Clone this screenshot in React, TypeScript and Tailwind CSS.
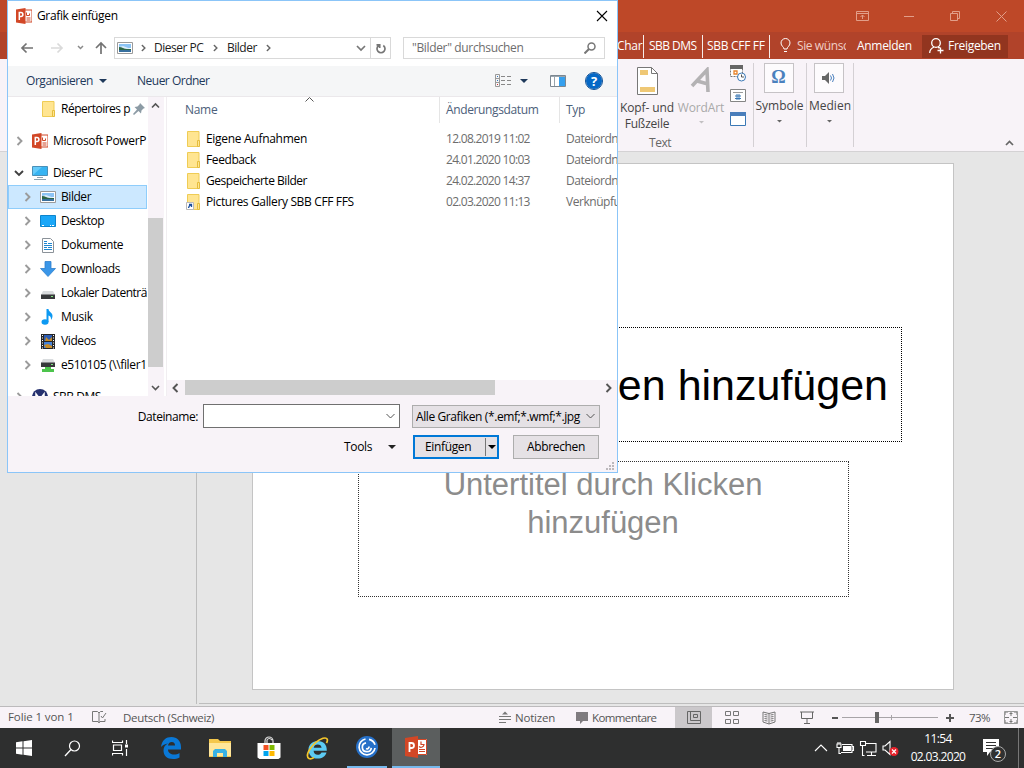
import React from "react";

type P = { children?: React.ReactNode; className?: string };

const Svg = ({ w, h, className = "", children }: P & { w: number; h: number }) => (
  <svg width={w} height={h} viewBox={`0 0 ${w} ${h}`} fill="none" className={`shrink-0 ${className}`}>
    {children}
  </svg>
);

const PptIcon = () => (
  <Svg w={16} h={16}>
    <path d="M8 2h8v12H8z" fill="#fff" stroke="#d04727" />
    <path d="M10.500 4.500v3h3v-2M10.500 10h4M10.500 12h4" stroke="#d04727" />
    <path d="M0 1.500L9.500 0v16L0 14.500z" fill="#d24726" />
    <path d="M3.300 12V4.500h1.600a1.900 1.900 0 0 1 0 4H3.300" stroke="#fff" strokeWidth="1.500" />
  </Svg>
);

const Folder = ({ link = false }: { link?: boolean }) => (
  <Svg w={16} h={16}>
    <path d="M1.500.5h11.500v15H1.500z" fill="#ffe591" stroke="#efcc55" />
    <path d="M11.500 9.500h2v6h-2z" fill="#ffe591" stroke="#e5bd3d" />
    {link && (
      <>
        <path d="M.5 8.500h7v7h-7z" fill="#fff" stroke="#b9b9b9" />
        <path d="M2.500 14c0-2 1-2.500 3-3.500M3 10.500h2.500V13" stroke="#1b4f9e" strokeWidth="1.300" />
      </>
    )}
  </Svg>
);

const PictureIcon = () => (
  <Svg w={16} h={12}>
    <path d="M.5.5h15v11H.5z" fill="#fff" stroke="#9a9a9a" />
    <path d="M2 2h12v4H2z" fill="#8cc4f5" />
    <path d="M2 5l4-1 8 3v1H2z" fill="#dcecf8" />
    <path d="M2 5c3 0 5 2 8 2h4v1H2z" fill="#2c6546" />
    <path d="M2 8h12v2H2z" fill="#376f9e" />
  </Svg>
);

const Chevron = ({ open = false, c = "#9b9b9b" }: { open?: boolean; c?: string }) => (
  <Svg w={10} h={10}>
    <path d={open ? "M1 3l4 4 4-4" : "M3.500 1l4 4-4 4"} stroke={open ? "#404040" : c} strokeWidth="1.900" />
  </Svg>
);

const Caret = ({ c = "#1e395b", w = 8 }: { c?: string; w?: number }) => (
  <Svg w={w} h={w / 2}>
    <path d={`M0 0h${w}l-${w / 2} ${w / 2}z`} fill={c} />
  </Svg>
);

const MonitorIcon = () => (
  <Svg w={16} h={14}>
    <path d="M.5.500h15v9H.5z" fill="#37b4f2" stroke="#4a90b8" />
    <path d="M1 9L10 1H1z" fill="#66cbfa" />
    <path d="M5 11.500h6M2 13.500h12" stroke="#8da3b0" />
  </Svg>
);
const DesktopIcon = () => (
  <Svg w={16} h={12}>
    <path d="M.5.500h15v11H.5z" fill="#1aa7f8" stroke="#0d84cc" />
    <path d="M2 10.500h2M10 10.500h1M12 10.500h2" stroke="#fff" />
  </Svg>
);
const DocIcon = () => (
  <Svg w={14} h={15} className="mx-px">
    <path d="M1.500.5h8l3 3v11h-11z" fill="#fff" stroke="#8b9299" />
    <path d="M3 3.500h3M3 5.500h3M7 5.500h4M3 7.500h8M3 9.500h3M7 9.500h4M3 11.500h8" stroke="#1f86d0" strokeWidth="1.200" />
  </Svg>
);
const DownIcon = () => (
  <Svg w={16} h={16}>
    <path d="M5 .5h6v7h4.500L8 15.500.5 7.500H5z" fill="#3a96e8" stroke="#2d7fcb" strokeWidth=".8" />
  </Svg>
);
const DriveIcon = ({ net = false }: { net?: boolean }) => (
  <Svg w={16} h={16}>
    <path d={net ? "M3 2h10l2 4H1z" : "M3 6h10l2 4H1z"} fill="#d9dcde" />
    <path d={net ? "M1 5.500h14v4.500H1z" : "M1 9.500h14V14H1z"} fill="#37393b" />
    <path d={net ? "M11 7.500h2" : "M11 11.500h2"} stroke="#7fe37f" />
    {net && <path d="M5 10h6v2h3v3H2v-3h3z" fill="#4cc44c" />}
  </Svg>
);
const MusicIcon = () => (
  <Svg w={16} h={16}>
    <ellipse cx="5" cy="13" rx="3.500" ry="2.700" fill="#0d99f2" />
    <path d="M6.500 0h2c0 3 4 3.500 4 7 0 2-1 3-1.500 4 .3-3-1-4-2.500-4.500V13h-2z" fill="#0d99f2" />
  </Svg>
);
const VideoIcon = () => (
  <Svg w={14} h={15} className="mx-px">
    <path d="M0 0h14v15H0z" fill="#262626" />
    <path d="M3 1h8v6H3z" fill="#2c5cb2" />
    <path d="M3 8h8v6H3z" fill="#4683d9" />
    <path d="M5 3l3 3 3-3v4H4zM3 11l4-1 4 2v2H5z" fill="#c88c27" />
    <path d="M1.500 1v14M12.500 1v14" stroke="#fff" strokeDasharray="1 1.500" />
  </Svg>
);
const DmsIcon = () => (
  <Svg w={16} h={16}>
    <circle cx="8" cy="8" r="8" fill="#26316f" />
    <path d="M4 11V5l4 5 4-5v6" stroke="#fff" strokeWidth="1.500" />
  </Svg>
);

const treeItems: [string, React.ReactNode, string][] = [
  ["Bilder", <PictureIcon />, "tracking-[-0.45px]"],
  ["Desktop", <DesktopIcon />, "tracking-[-0.45px]"],
  ["Dokumente", <DocIcon />, "tracking-[-0.4px]"],
  ["Downloads", <DownIcon />, "tracking-[-0.4px]"],
  ["Lokaler Datenträ", <DriveIcon />, "tracking-[-0.5px]"],
  ["Musik", <MusicIcon />, "tracking-[-0.3px]"],
  ["Videos", <VideoIcon />, "tracking-[-0.4px]"],
  ["e510105 (\\\\filer1", <DriveIcon net />, "tracking-[-0.37px]"],
];

function Tree() {
  return (
    <div className="h-[299px] w-[139px] shrink-0 overflow-hidden whitespace-nowrap text-black">
      <div className="flex h-6 items-center pl-[33px]">
        <Folder />
        <span className="ml-1 w-[70px] tracking-[-0.5px]">Répertoires p</span>
        <Svg w={12} h={12} className="ml-[2px]">
          <path d="M7 0l5 5-1.500.5-2 2-.5 3L5.500 8 1 12 0 11l4-4.500L1.500 4l3-.5 2-2z" fill="#8c9ba5" />
        </Svg>
      </div>
      <div className="mt-2 flex h-6 items-center pl-[6px]">
        <Chevron />
        <span className="ml-2"><PptIcon /></span>
        <span className="ml-[5px] tracking-[-0.35px]">Microsoft PowerP</span>
      </div>
      <div className="mt-2 flex h-6 items-center pl-[6px]">
        <Chevron open />
        <span className="ml-2"><MonitorIcon /></span>
        <span className="ml-[5px] tracking-[-0.5px]">Dieser PC</span>
      </div>
      {treeItems.map(([label, icon, tr], i) => (
        <div
          key={label}
          className={`flex h-6 items-center border pl-[13px] ${i === 0 ? "border-[#8fcdfb] bg-[#cce8ff]" : "border-transparent"}`}
        >
          <Chevron />
          <span className="ml-2 w-4">{icon}</span>
          <span className={`ml-[5px] ${tr}`}>{label}</span>
        </div>
      ))}
      <div className="mt-2 flex h-6 items-center pl-[6px]">
        <Chevron />
        <span className="ml-2"><DmsIcon /></span>
        <span className="ml-[5px] tracking-[-0.5px]">SBB DMS</span>
      </div>
    </div>
  );
}

const files: [string, string, string, string][] = [
  ["Eigene Aufnahmen", "12.08.2019 11:02", "Dateiordn", "tracking-[-0.3px]"],
  ["Feedback", "24.01.2020 10:03", "Dateiordn", "tracking-[-0.4px]"],
  ["Gespeicherte Bilder", "24.02.2020 14:37", "Dateiordn", "tracking-[-0.47px]"],
  ["Pictures Gallery SBB CFF FFS", "02.03.2020 11:13", "Verknüpfu", "tracking-[-0.35px]"],
];

function FileList() {
  return (
    <div className="flex h-[299px] min-w-0 flex-1 flex-col overflow-hidden border-l border-[#f1eef1] whitespace-nowrap">
      <div className="flex h-[26px] text-[#4c607a]">
        <div className="relative w-[272px] pt-[5px] pl-[18px] tracking-[-0.3px]">
          Name
          <Svg w={9} h={5} className="absolute top-0 left-[138px]">
            <path d="M.5 4.500l4-4 4 4" stroke="#555" />
          </Svg>
        </div>
        <div className="w-[120px] border-l border-[#e5e5e5] pt-[5px] pl-[6px] tracking-[-0.37px]">Änderungsdatum</div>
        <div className="flex-1 border-l border-[#e5e5e5] pt-[5px] pl-[6px] tracking-[-0.3px]">Typ</div>
      </div>
      <div className="flex-1 pt-[5px]">
        {files.map(([name, date, type, tr], i) => (
          <div key={name} className="flex h-[21px] items-center text-[#6d6d6d]">
            <div className="flex w-[272px] shrink-0 items-center pl-[19px] text-black">
              <Folder link={i === 3} />
              <span className={`ml-1 ${tr}`}>{name}</span>
            </div>
            <div className="w-[120px] shrink-0 pl-[7px] tracking-[-0.7px]">{date}</div>
            <div className="w-[58px] overflow-hidden pl-[7px] tracking-[-0.45px]">{type}</div>
          </div>
        ))}
      </div>
      <div className="flex h-4 items-start bg-[#f8f3f8]">
        <span className="mt-[3px] ml-1 rotate-180"><Chevron c="#555" /></span>
        <div className="ml-1 h-[15px] w-[310px] shrink-0 bg-[#cdcdcd]" />
        <span className="mt-[3px] ml-[108px]"><Chevron c="#555" /></span>
      </div>
    </div>
  );
}

function Dialog() {
  return (
    <div className="absolute top-0 left-[7px] flex h-[473px] w-[611px] flex-col overflow-hidden border border-[#8bc5f8] bg-white text-[12px] leading-4 tracking-[-0.35px] whitespace-nowrap">
      <div className="flex h-[30px] items-center pr-[9px] pl-2 text-black">
        <PptIcon />
        <span className="ml-[5px]">Grafik einfügen</span>
        <Svg w={12} h={12} className="ml-auto">
          <path d="M1 1l10 10M11 1L1 11" stroke="#000" strokeWidth="1.100" />
        </Svg>
      </div>
      <div className="mb-px flex h-[34px] items-center">
        <Svg w={98} h={14} className="ml-2">
          <path d="M17 7H6M10.500 2.500L6 7l4.500 4.500" stroke="#737373" strokeWidth="1.700" />
          <path d="M35 7h11M41.500 2.500L46 7l-4.500 4.500" stroke="#dadada" strokeWidth="1.700" />
          <path d="M62 5l2.500 2.500L67 5" stroke="#8a8a8a" strokeWidth="1.500" />
          <path d="M85 13V2M80 7l5-5 5 5" stroke="#737373" strokeWidth="1.700" />
        </Svg>
        <div className="flex h-[22px] w-[277px] items-center border border-[#d9d9d9] pb-px text-[#222]">
          <span className="ml-[2px]"><PictureIcon /></span>
          <span className="ml-[5px] scale-75"><Chevron c="#666" /></span>
          <span className="ml-[6px] w-[49px] tracking-[-0.5px]">Dieser PC</span>
          <span className="ml-[7px] scale-75"><Chevron c="#666" /></span>
          <span className="ml-[7px] w-[30px] tracking-[-0.5px]">Bilder</span>
          <span className="ml-[6px] scale-75"><Chevron c="#666" /></span>
          <Svg w={10} h={10} className="mr-1 ml-auto">
            <path d="M1 3l4 4 4-4" stroke="#777" strokeWidth="1.700" />
          </Svg>
          <div className="flex h-5 w-5 items-center justify-center border-l border-[#d9d9d9]">
            <Svg w={12} h={12}>
              <path d="M8.300 3A4 4 0 1 1 3.700 3M1.500 2.300h3.200v3.200" stroke="#767676" strokeWidth="1.700" transform="translate(0 .5)" />
            </Svg>
          </div>
        </div>
        <div className="ml-3 flex h-[22px] w-[202px] items-center border border-[#d9d9d9] px-2 text-[#6d6d6d]">
          "Bilder" durchsuchen
          <Svg w={12} h={12} className="ml-auto">
            <circle cx="7.500" cy="4.500" r="3.500" stroke="#777" strokeWidth="1.500" />
            <path d="M5 7l-4.500 4.500" stroke="#777" strokeWidth="2" />
          </Svg>
        </div>
      </div>
      <div className="flex h-[31px] shrink-0 items-center border-b border-[#ebe8eb] bg-[#f5f6f7] pl-[18px] text-[#1e395b]">
        <span className="w-[67px] tracking-[-0.45px]">Organisieren</span>
        <span className="ml-[6px]"><Caret /></span>
        <span className="ml-[30px] w-[73px] tracking-[-0.5px]">Neuer Ordner</span>
        <Svg w={17} h={14} className="ml-[285px]">
          <path d="M.5.5h4v12h-4zM.5 4.500h4M.5 8.500h4" stroke="#999" />
          <path d="M6 2.500h4M12 2.500h4M6 6.500h4M12 6.500h4M6 10.500h4M12 10.500h4" stroke="#888" />
          <path d="M2 2.500h1M2 6.500h1" stroke="#3478c0" />
          <path d="M2 10.500h1" stroke="#c33" />
        </Svg>
        <span className="ml-2"><Caret /></span>
        <Svg w={16} h={12} className="ml-[22px]">
          <path d="M.5.5h15v11H.5z" fill="#fff" stroke="#7b8791" />
          <path d="M1 1.500h14M4.500 2v9" stroke="#9aa5ad" />
          <path d="M9 2h6v9H9z" fill="#35a0ee" />
        </Svg>
        <div className="ml-5 flex h-4 w-4 items-center justify-center rounded-full bg-[#0568c6] text-[13px] font-bold text-white outline outline-[#0b4e95]">?</div>
      </div>
      <div className="flex h-[299px] shrink-0">
        <Tree />
        <div className="mr-px ml-px flex w-4 shrink-0 flex-col items-center bg-[#f8f3f8]">
          <div className="mr-px flex h-[121px] shrink-0 items-start pt-1">
            <Svg w={9} h={9}><path d="M1 6.500L4.500 3 8 6.500" stroke="#555" strokeWidth="1.600" /></Svg>
          </div>
          <div className="h-[149px] w-[15px] shrink-0 self-start bg-[#cdcdcd]" />
          <Svg w={9} h={9} className="mt-auto mr-px mb-1"><path d="M1 3l3.500 3.500L8 3" stroke="#555" strokeWidth="1.600" /></Svg>
        </div>
        <div className="w-px shrink-0" />
        <FileList />
      </div>
      <div className="relative flex-1 bg-[#f8f3f8] text-black">
        <div className="flex h-10 items-center">
          <span className="w-[190px] pt-px text-right tracking-[-0.42px]">Dateiname:</span>
          <div className="ml-[5px] flex h-6 w-[197px] items-center justify-end border border-[#707070] bg-white pr-1">
            <Svg w={9} h={6}><path d="M.5 1l4 4 4-4" stroke="#555" /></Svg>
          </div>
          <div className="ml-3 flex h-[23px] w-[188px] items-center border border-[#adadad] bg-[#e5e1e5] pr-1 pl-[3px]">
            <span className="w-[165px] overflow-hidden pt-px tracking-[-0.4px]">Alle Grafiken (*.emf;*.wmf;*.jpg</span>
            <Svg w={9} h={6} className="ml-auto"><path d="M.5 1l4 4 4-4" stroke="#555" /></Svg>
          </div>
        </div>
        <div className="mt-[-1px] flex h-6 items-center">
          <span className="ml-[336px] w-7">Tools</span>
          <span className="ml-4"><Caret c="#222" w={8} /></span>
          <div className="ml-[17px] flex h-6 w-[86px] items-center border-2 border-[#0078d7] bg-[#e5e1e5]">
            <span className="ml-[10px] w-[60px]">Einfügen</span>
            <span className="flex h-[18px] items-center border-l border-[#777] pl-[2px]"><Caret c="#000" /></span>
          </div>
          <div className="ml-[14px] flex h-6 w-[86px] items-center justify-center border border-[#adadad] bg-[#e5e1e5]">Abbrechen</div>
        </div>
        <Svg w={9} h={9} className="absolute right-[2px] bottom-[1px]">
          <path d="M6 1h2M3 4h2M6 4h2M0 7h2M3 7h2M6 7h2" stroke="#bcb8bc" strokeWidth="2" />
        </Svg>
      </div>
    </div>
  );
}

function OfficeHeader() {
  return (
    <>
      <div className="flex h-8 shrink-0 items-center justify-end bg-[#be4828] pr-4">
        <Svg w={152} h={14}>
          <g stroke="#e29e89">
            <path d="M.5 2.500h12v9H.5zM.5 4.500h12M6.500 10V6M4.500 8l2-2 2 2" />
            <path d="M48 7.500h10" />
            <path d="M94.500 4.500h7v7h-7zM96.500 4V2.500h7v7H102" />
            <path d="M140.500 2.500l10 10M150.500 2.500l-10 10" />
          </g>
        </Svg>
      </div>
      <div className="flex h-[27px] shrink-0 items-center bg-[#b1432a] pt-px tracking-[-0.3px] whitespace-nowrap text-white">
        <span className="ml-[617px] flex h-[23px] w-[27px] items-center border-r border-white/90">Char</span>
        <span className="flex h-[23px] w-[59px] items-center border-r border-white/90 pl-[5px] tracking-[-0.55px]">SBB DMS</span>
        <span className="flex h-[23px] w-[67px] items-center border-r border-white/90 pl-1 tracking-[-0.3px]">SBB CFF FF</span>
        <Svg w={12} h={16} className="ml-[10px]">
          <path d="M4 11c0-2-3-3-3-6a4.500 4.500 0 0 1 9 0c0 3-3 4-3 6zM4 13.500h3" stroke="#fff" />
        </Svg>
        <span className="ml-[5px] w-[49px] overflow-hidden tracking-[-0.4px] text-[#f0cfc6]">Sie wünsc</span>
        <span className="ml-[11px] w-[65px]">Anmelden</span>
        <div className="flex h-[23px] w-[86px] items-center bg-[#92351f] pl-[7px]">
          <Svg w={15} h={16}>
            <circle cx="7" cy="5" r="4.300" stroke="#fff" strokeWidth="1.300" />
            <path d="M.7 15c0-3 2-5 4.300-6M9 9.500c1 0 1.500 0 2 .5M11.500 9.500v6M8.500 12.500h6" stroke="#fff" strokeWidth="1.300" />
          </Svg>
          <span className="ml-[4px]">Freigeben</span>
        </div>
      </div>
      <div className="flex h-[93px] shrink-0 border-b border-[#d4d2d4] bg-[#f8f3f8] pl-[618px] text-[#444]">
        <div className="flex h-[92px] w-[135px] flex-col">
          <div className="flex h-[76px]">
            <div className="flex w-[58px] flex-col items-center pt-2 text-center">
              <Svg w={21} h={28}>
                <path d="M.5.5h14l6 6v21H.5z" fill="#fff" stroke="#777" />
                <path d="M14.500.5v6h6" stroke="#777" />
                <path d="M3 3h8v5H3zM3 20h15v5H3z" fill="#efc875" />
              </Svg>
              <span className="mt-[5px] tracking-[-0.1px] whitespace-nowrap">Kopf- und</span>
              <span className="tracking-[-0.2px]">Fußzeile</span>
            </div>
            <div className="flex w-[50px] flex-col items-center pt-2 text-[#a9a9a9]">
              <Svg w={22} h={28}>
                <path d="M2 19L17 3l1 22M7 14l11 3" stroke="#b4b2b4" strokeWidth="3.600" />
              </Svg>
              <span className="mt-[5px] tracking-[-0.1px]">WordArt</span>
              <span className="mt-[5px]"><Caret c="#c2c0c2" w={5} /></span>
            </div>
            <div className="flex flex-col pt-[6px] pl-1">
              <Svg w={16} h={17}>
                <path d="M.5.5h12v11H.5z" fill="#fff" stroke="#777" strokeDasharray="2 1" />
                <path d="M0 0h13v4H0z" fill="#666" />
                <path d="M4 6h3v3H4z" stroke="#e8832a" strokeWidth="1.300" />
                <circle cx="11.500" cy="12" r="4" fill="#fff" stroke="#3b78b5" />
                <path d="M11.500 9.500V12H14" stroke="#555" />
              </Svg>
              <Svg w={16} h={13} className="mt-[7px]">
                <path d="M.5.5h15v12H.5z" fill="#fff" stroke="#858585" />
                <path d="M3 3.500h10" stroke="#999" />
                <path d="M7 5v6M9 5v6M5 7h6M5 9.500h6" stroke="#3b78b5" />
              </Svg>
              <Svg w={16} h={14} className="mt-[10px]">
                <path d="M.5.5h15v13H.5z" fill="#fff" stroke="#3b78b5" />
                <path d="M0 0h16v4H0z" fill="#4a7ebb" />
              </Svg>
            </div>
          </div>
          <span className="w-[84px] text-center tracking-[-0.5px] text-[#666]">Text</span>
        </div>
        {["Symbole", "Medien"].map((l, i) => (
          <div key={l} className={`mt-1 flex h-[84px] flex-col items-center border-l border-[#d4d0d4] ${i ? "w-[47px] pr-px" : "w-[53px] pr-[2px]"}`}>
            <div className="mr-px flex h-[30px] w-[30px] items-center justify-center border border-[#c6c3c6] bg-[#fdfbfd] font-serif text-[18px] font-bold text-[#4a80bd]">
              {i ? (
                <Svg w={14} h={12}>
                  <path d="M0 4h3l4-4v12L3 8H0z" fill="#666" />
                  <path d="M8.500 3.500q2 2.500 0 5M10.500 2q3 4 0 8" stroke="#4a80bd" />
                </Svg>
              ) : (
                "Ω"
              )}
            </div>
            <span className="mt-[5px] ml-px">{l}</span>
            <span className="mt-[6px]"><Caret c="#666" w={5} /></span>
          </div>
        ))}
        <div className="mt-1 h-[84px] border-l border-[#d4d0d4]" />
        <Svg w={9} h={6} className="mt-[81px] mr-[10px] ml-auto">
          <path d="M1 5l3.500-3.500L8 5" stroke="#666" strokeWidth="1.700" />
        </Svg>
      </div>
    </>
  );
}

function StatusBar() {
  return (
    <div className="flex h-[22px] shrink-0 items-center border-t border-[#bcbabc] bg-[#f8f3f8] pl-2 tracking-[-0.35px] whitespace-nowrap text-[#555]">
      <span className="w-[65px] pb-px text-[11.500px] tracking-[-0.1px]">Folie 1 von 1</span>
      <Svg w={15} h={13} className="ml-[19px]">
        <path d="M7 2L5.500.5h-5v10H6l1 1.500 1-1.500h5V8M7 2v9M7 2l1.500-1.500H11M9 5l1.500 2L14 2" stroke="#777" />
      </Svg>
      <span className="ml-[16px] w-[92px] text-[11.500px] tracking-[-0.3px]">Deutsch (Schweiz)</span>
      <Svg w={12} h={13} className="ml-[284px]">
        <path d="M0 5.500h12M0 8.500h12M0 11.500h7" stroke="#777" />
        <path d="M3 3.500L6 .5l3 3z" fill="#777" />
      </Svg>
      <span className="ml-[4px] w-[39px] text-[11.500px] tracking-[-0.2px]">Notizen</span>
      <Svg w={12} h={12} className="ml-[22px]">
        <path d="M0 0h12v9H7l-3 3V9H0z" fill="#7f7b7f" />
      </Svg>
      <span className="ml-[4px] w-[62px] text-[11.500px] tracking-[-0.6px]">Kommentare</span>
      <div className="ml-[21px] flex h-[21px] w-[37px] items-center justify-center bg-[#cbc8cb]">
        <Svg w={14} h={13}>
          <path d="M.5.5h13v12H.5zM3.500.5v9M3.500 9.500h10M6.500 3.500h4v3h-4z" stroke="#666" />
        </Svg>
      </div>
      <Svg w={16} h={13} className="ml-3">
        <path d="M1.500.5h5v4h-5zM9.500.5h5v4h-5zM1.500 8.500h5v4h-5zM9.500 8.500h5v4h-5z" stroke="#777" />
      </Svg>
      <Svg w={14} h={14} className="ml-[22px]">
        <path d="M1 1l6 1.500L13 1v10l-6 2-6-2zM7 2v11" stroke="#777" />
        <path d="M2.500 3.500l3 .5M2.500 5.500l3 .5M2.500 7.500l3 .5M2.500 9.500l3 .5M11.500 3.500l-3 .5M11.500 5.500l-3 .5M11.500 7.500l-3 .5M11.500 9.500l-3 .5" stroke="#777" />
      </Svg>
      <Svg w={14} h={13} className="ml-[24px]">
        <path d="M0 1h14M1.500 1v6.500h11V1M7 8v4M4 12.500h6" stroke="#666" />
      </Svg>
      <Svg w={126} h={14} className="ml-[17px]">
        <path d="M1 7h6M115 7h8M119 3v8" stroke="#555" strokeWidth="2" />
        <path d="M11 6.500h96M60.500 4v5" stroke="#a7a4a7" />
        <path d="M44 1h4v11h-4z" fill="#666" />
      </Svg>
      <span className="ml-3 w-[22px] text-[11.500px] tracking-[-0.6px]">73%</span>
      <Svg w={14} h={13} className="ml-[13px]">
        <path d="M1 4V1h3M10 1h3v3M13 9v3h-3M4 12H1V9M7 .5V5M7 8v4.500M.5 6.500H5M9 6.500h4.500M5.500 2.500h3M5.500 10.500h3" stroke="#777" />
        <path d="M.5.5h13v12H.5z" stroke="#999" />
      </Svg>
    </div>
  );
}

function Taskbar() {
  return (
    <div className="flex h-10 shrink-0 items-center bg-[#2e2f2f] text-white">
      <div className="flex h-10 w-12 items-center justify-center">
        <Svg w={16} h={16}>
          <path d="M0 2.200l6.500-.9v6.200H0zM7.500 1.200L16 0v7.500H7.500zM0 8.500h6.500v6.200L0 13.800zM7.500 8.500H16V16l-8.500-1.200z" fill="#fff" />
        </Svg>
      </div>
      <div className="flex h-10 w-12 items-center justify-center">
        <Svg w={17} h={17}>
          <circle cx="10.500" cy="6" r="5" stroke="#fff" strokeWidth="1.200" />
          <path d="M7 9.500l-6 6.500" stroke="#fff" strokeWidth="1.300" />
        </Svg>
      </div>
      <div className="flex h-10 w-12 items-center justify-center">
        <Svg w={16} h={16}>
          <path d="M.5.500v2h10v-2M.5 15.500v-2h10v2M1.500 5h8v5.500h-8zM14.500 0v4M14.500 9v7" stroke="#fff" strokeWidth="1.200" />
          <path d="M13 4.500h3v3h-3z" fill="#fff" />
        </Svg>
      </div>
      <div className="flex h-10 w-[49px] items-center justify-center pl-1">
        <Svg w={20} h={22}>
          <path d="M0 10C1 3 5 0 10.500 0 16 0 20 4 20 10v2.500H7c0 3.500 3 5 6 5 2 0 4-.5 5.500-1.500v4.500c-2 1-4 1.500-6.500 1.500-6 0-9.500-3.500-9.500-8.500C2.500 10 4 8 7 6.500 4 7 1.500 8 0 10zm7-1.500h7C14 6.500 13 5 10.800 5 8.500 5 7.300 6.700 7 8.500z" fill="#0a78d6" />
        </Svg>
      </div>
      <div className="flex h-10 w-[49px] items-center justify-center pl-1">
        <Svg w={22} h={18}>
          <path d="M0 0h9l2 2h11v16H0z" fill="#f4c74c" />
          <path d="M0 4h22v13H0z" fill="#ffe69a" />
          <path d="M4 18v-6l2-2h10l2 2v6h-4v-4H8v4z" fill="#36b1e4" />
        </Svg>
      </div>
      <div className="flex h-10 w-[49px] items-center justify-center pl-1">
        <Svg w={24} h={24} className="mb-px">
          <path d="M8 8V5a4 4 0 0 1 8 0v3M10 7V4q2-3 5 0" stroke="#ddd" strokeWidth="1.200" />
          <path d="M.5 7h23v14.500l-2 1.500h-19l-2-1.500z" fill="#fff" />
          <path d="M6.500 9h5v5h-5z" fill="#f25022" />
          <path d="M12.500 9h5v5h-5z" fill="#7fba00" />
          <path d="M6.500 15h5v5h-5z" fill="#00a4ef" />
          <path d="M12.500 15h5v5h-5z" fill="#ffb900" />
        </Svg>
      </div>
      <div className="flex h-10 w-[52px] items-center justify-center pr-1 pl-1">
        <Svg w={23} h={23}>
          <path d="M20.500 15.500h-5c-.8 1.700-2 2.300-3.700 2.300-2.500 0-4-1.500-4.200-4h13.200C21 7.500 17.500 4 11.800 4 6.300 4 2.500 7.500 2.500 12.700c0 5.300 3.500 8.800 9.200 8.800 4.500 0 7.500-2 8.800-6zM7.700 10.800C8 8.700 9.500 7.500 11.700 7.500s3.700 1.200 3.900 3.300z" fill="#5ccbf3" />
          <path d="M3 21.500C-2 18 7 5 17 1.300c5-1.300 5 2 3.500 4.700M3 21.500c1.500.8 3.500 0 5-1" stroke="#f6c72b" strokeWidth="1.700" />
        </Svg>
      </div>
      <div className="ml-1 flex h-10 w-10 items-center justify-center border-b-2 border-[#76b9ed]">
        <Svg w={22} h={22}>
          <circle cx="11" cy="11" r="11" fill="#2670c8" />
          <path d="M9.500 3a8 8 0 1 0 9.500 9M10 6.800a4.500 4.500 0 1 0 5.300 5M13 10.500a2 2 0 0 1-3 2M13 3.300a8 8 0 0 1 6 5.500" stroke="#fff" strokeWidth="1.700" />
        </Svg>
      </div>
      <div className="ml-[5px] flex h-10 w-12 items-center justify-center border-b-2 border-[#76b9ed] bg-[#5b5e5e]">
        <Svg w={22} h={22}>
          <path d="M11 3h11v16H11z" fill="#fff" />
          <path d="M11 3.500h10.500v15H11" stroke="#d24726" />
          <path d="M14 10.500a3 3 0 0 0 5-2h-3v-3M14 13.500h6M14 15.500h6" stroke="#d24726" strokeWidth="1.200" />
          <path d="M0 2l13-2v22L0 20z" fill="#d24726" />
          <path d="M4.500 16V7h2a2.500 2.500 0 0 1 0 5h-2" stroke="#fff" strokeWidth="1.800" />
        </Svg>
      </div>
      <Svg w={90} h={20} className="ml-[374px]">
        <g stroke="#fff" strokeWidth="1.100">
          <path d="M1 13l6-6 6 6" />
          <path d="M28 6.500h10v8H27M38 8.500h1.500v4H38M23 6v3.500h4V6zM24 6V4M26 6V4M25 10v5.500h2" />
          <path d="M52 5.500h10v8.500h-10M57.500 14v3M53 17.500h9M46.500 3.500h5v4h-5zM48.500 8v9.500h2" />
          <path d="M69 8h2l5-4.500v13L71 12h-2z" />
        </g>
        <path d="M29 8h8v5h-8z" fill="#fff" />
        <circle cx="80" cy="13.500" r="4.500" fill="#e6212a" />
        <path d="M78 11.500l4 4M82 11.500l-4 4" stroke="#fff" strokeWidth="1.200" />
      </Svg>
      <div className="ml-[5px] flex w-[58px] flex-col items-center text-[12px] leading-[18px] tracking-[-0.65px]">
        <span>11:54</span>
        <span>02.03.2020</span>
      </div>
      <div className="relative mt-[6px] ml-4 h-6 w-[26px] shrink-0">
        <Svg w={16} h={17}>
          <path d="M0 0h16v13H7l-3 4v-4H0z" fill="#fff" />
          <path d="M3 3.500h10M3 6.500h10M3 9.500h7" stroke="#333" />
        </Svg>
        <div className="absolute top-[7px] left-[7px] flex h-4 w-4 items-center justify-center rounded-full border border-[#aaa] bg-[#303131] text-[11px] font-semibold">2</div>
      </div>
      <div className="ml-auto h-10 w-[6px] border-l border-[#777]" />
    </div>
  );
}

export default function App() {
  return (
    <div className="relative flex h-[768px] w-[1024px] flex-col overflow-hidden bg-[#e6e6e6] font-['Open_Sans','Noto_Sans',sans-serif] text-[12px] leading-4">
      <OfficeHeader />
      <div className="flex min-h-0 flex-1">
        <div className="mb-[2px] w-[197px] shrink-0 border-r border-[#bdbdbd]" />
        <div className="mb-[2px] ml-[2px] flex-1 border-b border-[#bdbdbd] pt-[11px] pl-[53px]">
          <div className="flex h-[527px] w-[702px] flex-col border border-[#c4c4c4] bg-white pt-[163px] font-['Liberation_Sans',Arial,sans-serif]">
            <div className="ml-[52px] flex h-[115px] w-[597px] items-center justify-center border border-dotted border-black pr-[3px] text-[43px] leading-[50px] whitespace-nowrap text-black">
              Titel durch Klicken hinzufügen
            </div>
            <div className="mt-[19px] ml-[105px] h-[136px] w-[491px] border border-dotted border-[#333] pt-1 pr-px text-center text-[31px] leading-[38px] text-[#8c8c8c]">
              Untertitel durch Klicken
              <br />
              hinzufügen
            </div>
          </div>
        </div>
      </div>
      <StatusBar />
      <Taskbar />
      <Dialog />
    </div>
  );
}
